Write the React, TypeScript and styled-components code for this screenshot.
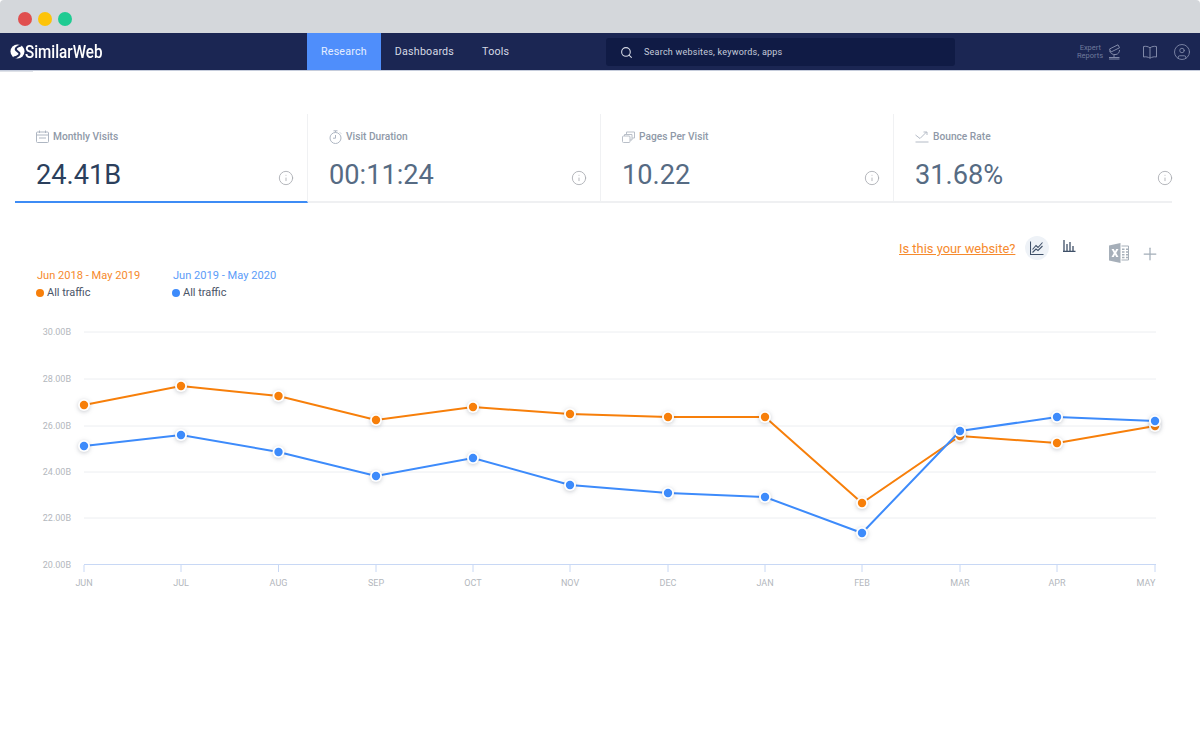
import React from 'react';
import styled, { createGlobalStyle } from 'styled-components';
import { CircleUser, Info, Plus, Search } from 'lucide-react';

const GlobalStyle = createGlobalStyle`
    html, body {
        margin: 0;
        background: #fff;
        overflow: hidden;
    }
    * {
        box-sizing: border-box;
    }
    body {
        font-family: Roboto, "Liberation Sans", sans-serif;
    }
`;

const Page = styled.div`
    width: 1200px;
    height: 730px;
    overflow: hidden;
`;

const WindowBar = styled.div`
    display: flex;
    align-items: center;
    gap: 6px;
    height: 33px;
    padding: 5px 0 0 18px;
    background: #d4d7db;
    border-radius: 4px 4px 0 0;
`;

const Light = styled.span<{ $color: string }>`
    width: 14px;
    height: 14px;
    border-radius: 50%;
    background: ${(p) => p.$color};
`;

const Nav = styled.nav`
    position: relative;
    display: flex;
    align-items: stretch;
    height: 38px;
    background: #1b2653;
    border-bottom: 1px solid #c6cddc;
    color: #d5d9e4;

    &::after {
        content: '';
        position: absolute;
        left: 0;
        bottom: -2px;
        width: 33px;
        height: 1px;
        background: #dfe2e8;
    }
`;

const LogoWrap = styled.div`
    display: flex;
    flex: none;
    align-items: center;
    width: 307px;
    padding-left: 10px;
`;

const LogoText = styled.span`
    display: inline-block;
    font-size: 19px;
    font-weight: 500;
    color: #fff;
    transform: scaleX(0.8);
    transform-origin: left center;
`;

const NavItem = styled.div<{ $active?: boolean }>`
    display: flex;
    align-items: center;
    justify-content: center;
    padding: 0 14px;
    font-size: 10.7px;
    letter-spacing: 0.2px;
    background: ${(p) => (p.$active ? '#4f8efb' : 'transparent')};
    color: ${(p) => (p.$active ? '#e6eeff' : '#d5d9e4')};
`;

const NavLinks = styled.div`
    display: flex;
    flex: none;
    align-items: stretch;
    width: 299px;
`;

const SearchBox = styled.div`
    display: flex;
    flex: none;
    align-items: center;
    gap: 11px;
    width: 349px;
    height: 28px;
    margin-top: 5px;
    padding-left: 14px;
    background: #101b45;
    border-radius: 3px;
    color: #c5cbdb;
    font-size: 9px;
    letter-spacing: 0.23px;
`;

const NavRight = styled.div`
    display: flex;
    flex: none;
    align-items: center;
    margin-left: 122px;
    color: #7e88a8;
`;

const ExpertLabel = styled.div`
    width: 24px;
    font-size: 7.5px;
    line-height: 8px;
    text-align: right;
    color: #6f7a9c;
    margin-right: 7px;
`;

const NavIconGap = styled.div<{ $gap: number }>`
    display: flex;
    margin-left: ${(p) => p.$gap}px;
`;

const KpiRow = styled.section`
    display: grid;
    grid-template-columns: 293px 293px 293px 278px;
    height: 89px;
    margin: 43px 0 0 15px;
`;

const KpiInfo = styled.div`
    position: absolute;
    right: 13px;
    bottom: 15px;
    display: flex;
    color: #a9acb1;
`;

const KpiTile = styled.div<{ $active?: boolean }>`
    position: relative;
    padding: 16px 0 0 21px;
    border-right: 1px solid #f0f1f3;
    border-bottom: ${(p) => (p.$active ? '2px solid #3e8cf5' : '2px solid #eff0f2')};

    &:last-child {
        border-right: none;
    }

    &:last-child ${KpiInfo} {
        right: -1px;
    }
`;

const KpiTitle = styled.div`
    display: flex;
    align-items: center;
    gap: 4px;
    height: 13px;
    font-size: 10.2px;
    font-weight: 500;
    color: #8f99a8;
    white-space: nowrap;
`;

const KpiValue = styled.div<{ $active?: boolean }>`
    margin-top: 15px;
    font-size: 27.2px;
    line-height: 34px;
    color: ${(p) => (p.$active ? '#2b3f5c' : '#566b83')};
`;

const Toolbar = styled.div`
    display: flex;
    align-items: flex-start;
    height: 31px;
    margin-top: 33px;
    padding-left: 899px;
`;

const SiteLink = styled.a`
    margin-top: 5px;
    width: 116px;
    font-size: 12.9px;
    line-height: 15px;
    color: #f68a2d;
    text-decoration: underline;
    white-space: nowrap;
`;

const ChartToggle = styled.div`
    display: flex;
    align-items: center;
    justify-content: center;
    width: 24px;
    height: 24px;
    margin-left: 10px;
    border-radius: 50%;
    background: #eef2f7;
`;

const BarToggle = styled.div`
    display: flex;
    margin: 4px 0 0 14px;
`;

const ExcelWrap = styled.div`
    display: flex;
    margin: 7px 0 0 33px;
`;

const PlusWrap = styled.div`
    display: flex;
    margin: 8px 0 0 11px;
    color: #a3adb8;
`;

const Legend = styled.div`
    display: flex;
    height: 53px;
    padding-left: 36px;
`;

const LegendGroup = styled.div`
    width: 136px;
    padding-top: 2px;
`;

const LegendRange = styled.div<{ $color: string }>`
    font-size: 11.1px;
    line-height: 14px;
    padding-left: 1px;
    color: ${(p) => p.$color};
    white-space: nowrap;
`;

const LegendItem = styled.div`
    display: flex;
    align-items: center;
    gap: 3px;
    margin-top: 3px;
    font-size: 11px;
    line-height: 14px;
    color: #4a5568;
`;

const LegendDot = styled.span<{ $color: string }>`
    width: 8px;
    height: 8px;
    border-radius: 50%;
    background: ${(p) => p.$color};
`;

const ChartSvg = styled.svg`
    display: block;
    width: 1200px;
    height: 280px;
`;

const AxisText = styled.text`
    font-family: Roboto, "Liberation Sans", sans-serif;
    font-size: 9px;
    fill: #b3b7bd;
`;

const Point = styled.g`
    filter: drop-shadow(0 1px 2px rgba(40, 50, 70, 0.25));
`;

const ORANGE = '#f77f0a';
const BLUE = '#3d8bfb';

const xs = [84, 181, 278.5, 376, 473, 570, 668, 765, 862, 960, 1057, 1155];
const months = ['JUN', 'JUL', 'AUG', 'SEP', 'OCT', 'NOV', 'DEC', 'JAN', 'FEB', 'MAR', 'APR', 'MAY'];
const orange = [405, 386, 396, 420, 407, 414, 417, 417, 503, 436, 443, 426];
const blue = [446, 435, 452, 476, 458, 485, 493, 497, 533, 431, 417, 421];
const grid = [
    { y: 332, label: '30.00B' },
    { y: 379, label: '28.00B' },
    { y: 426, label: '26.00B' },
    { y: 472, label: '24.00B' },
    { y: 518, label: '22.00B' },
];

const Logo = () => (
    <svg width="15" height="15" viewBox="0 0 15 15">
        <circle cx="7.5" cy="7.5" r="7" fill="#fff" />
        <path d="M11 1.5C7 2.5 4.5 4.5 6.5 6.5S11 9 8.5 11.5C7 13 5 13.500 3.500 13.500" fill="none" stroke="#1b2653" strokeWidth="2" />
    </svg>
);

const DishIcon = () => (
    <svg width="13" height="16" viewBox="0 0 13 16" fill="none" stroke="#8089a8" strokeWidth="1">
        <path d="M1.500 5 10 0.800l1.500 3L3 8z" />
        <path d="M1.500 6.500C2 9.500 5 11 8 10.500 10.500 10 11.500 8 11.500 6" />
        <path d="M6 10.800V13M1 13.500h10.500M1 15h10.500" />
    </svg>
);

const BookIcon = () => (
    <svg width="14" height="14" viewBox="0 0 14 14" fill="none" stroke="#8089a8" strokeWidth="1">
        <path d="M0.500 1.500C3 1 5 1.500 7 2.800 9 1.500 11 1 13.500 1.500v10.500C11 11.500 9 12 7 13.200 5 12 3 11.500 0.500 12z" />
        <path d="M7 2.800v10.400" />
    </svg>
);

const CalendarIcon = () => (
    <svg width="13" height="13" viewBox="0 0 13 13" fill="none" stroke="#aeb6c2" strokeWidth="1">
        <rect x="0.500" y="2" width="12" height="10.500" rx="1" />
        <path d="M0.500 5h12M3.500 0.500v2.500M9.500 0.500v2.500M3 8h7" />
    </svg>
);

const StopwatchIcon = () => (
    <svg width="13" height="14" viewBox="0 0 13 14" fill="none" stroke="#aeb6c2" strokeWidth="1">
        <circle cx="6.500" cy="8" r="5.500" />
        <path d="M4.500 0.800h4M6.500 1v1.500M6.500 5v3.200H4M11 2.500l1 1" />
    </svg>
);

const PagesIcon = () => (
    <svg width="13" height="12" viewBox="0 0 13 12" fill="none" stroke="#b9bfc8" strokeWidth="1">
        <rect x="0.500" y="5" width="7.500" height="6.500" rx="1" />
        <path d="M2.500 5V3.500h7.500V9H8M4.500 3.500V1h8v6H10" />
    </svg>
);

const BounceIcon = () => (
    <svg width="14" height="12" viewBox="0 0 14 12" fill="none" stroke="#b4bbc6" strokeWidth="1">
        <path d="M0.500 4 5 7.500 11.500 1M8.500 1h3.500v3M0.500 11h13" />
    </svg>
);

const LineToggleIcon = () => (
    <svg width="14" height="14" viewBox="0 0 14 14" fill="none" stroke="#3f5068" strokeWidth="1.100">
        <path d="M0.500 0.500v13h13" />
        <path d="M2.500 8.500 6 4.500 8 6.500 12.500 1.500M2.500 11.500 6 8 8 9.500 12.500 5" />
    </svg>
);

const BarToggleIcon = () => (
    <svg width="13" height="12" viewBox="0 0 13 12" fill="none" stroke="#3f5068" strokeWidth="1.300">
        <path d="M1 0v11M12.500 11.300H0M4 4v7M7 2v9M10 6v5" />
    </svg>
);

const ExcelIcon = () => (
    <svg width="20" height="20" viewBox="0 0 20 20">
        <path d="M0 2.500 11.500 0v20L0 17.500z" fill="#a6afb9" />
        <path d="M2.500 6h2.300l1.200 2.400L7.200 6h2.300L7.200 10l2.300 4H7.200L6 11.600 4.800 14H2.500l2.300-4z" fill="#fff" />
        <path d="M12.500 3h7v14h-7" fill="none" stroke="#a6afb9" />
        <path d="M13 6.200h2.500M13 9h2.500M13 11.800h2.500M13 14.500h2.500M17 6.200h2M17 9h2M17 11.800h2M17 14.500h2" stroke="#a6afb9" strokeWidth="1.500" />
    </svg>
);

const linePoints = (ys: number[]) => ys.map((y, i) => `${xs[i]},${y - 320}`).join(' ');

const Series = ({ ys, color }: { ys: number[]; color: string }) => (
    <>
        <polyline points={linePoints(ys)} fill="none" stroke={color} strokeWidth="2" />
        {ys.map((y, i) => (
            <Point key={i}>
                <circle cx={xs[i]} cy={y - 320} r="6" fill="#fff" />
                <circle cx={xs[i]} cy={y - 320} r="4.200" fill={color} />
            </Point>
        ))}
    </>
);

const kpis = [
    { title: 'Monthly Visits', value: '24.41B', icon: <CalendarIcon />, active: true },
    { title: 'Visit Duration', value: '00:11:24', icon: <StopwatchIcon /> },
    { title: 'Pages Per Visit', value: '10.22', icon: <PagesIcon /> },
    { title: 'Bounce Rate', value: '31.68%', icon: <BounceIcon /> },
];

const App = () => {
    return (
        <Page>
            <GlobalStyle />
            <WindowBar>
                <Light $color="#e04f4f" />
                <Light $color="#fdc40a" />
                <Light $color="#1fcb92" />
            </WindowBar>
            <Nav>
                <LogoWrap>
                    <Logo />
                    <LogoText>SimilarWeb</LogoText>
                </LogoWrap>
                <NavLinks>
                    <NavItem $active>Research</NavItem>
                    <NavItem>Dashboards</NavItem>
                    <NavItem>Tools</NavItem>
                </NavLinks>
                <SearchBox>
                    <Search size={13} color="#d5d9e4" />
                    Search websites, keywords, apps
                </SearchBox>
                <NavRight>
                    <ExpertLabel>Expert Reports</ExpertLabel>
                    <DishIcon />
                    <NavIconGap $gap={22}>
                        <BookIcon />
                    </NavIconGap>
                    <NavIconGap $gap={16}>
                        <CircleUser size={18} strokeWidth={1.200} color="#8089a8" />
                    </NavIconGap>
                </NavRight>
            </Nav>
            <KpiRow>
                {kpis.map((kpi) => (
                    <KpiTile key={kpi.title} $active={kpi.active}>
                        <KpiTitle>
                            {kpi.icon}
                            {kpi.title}
                        </KpiTitle>
                        <KpiValue $active={kpi.active}>{kpi.value}</KpiValue>
                        <KpiInfo>
                            <Info size={16} strokeWidth={1.300} />
                        </KpiInfo>
                    </KpiTile>
                ))}
            </KpiRow>
            <Toolbar>
                <SiteLink>Is this your website?</SiteLink>
                <ChartToggle>
                    <LineToggleIcon />
                </ChartToggle>
                <BarToggle>
                    <BarToggleIcon />
                </BarToggle>
                <ExcelWrap>
                    <ExcelIcon />
                </ExcelWrap>
                <PlusWrap>
                    <Plus size={20} strokeWidth={1.500} />
                </PlusWrap>
            </Toolbar>
            <Legend>
                <LegendGroup>
                    <LegendRange $color="#f68a2d">Jun 2018 - May 2019</LegendRange>
                    <LegendItem>
                        <LegendDot $color={ORANGE} />
                        All traffic
                    </LegendItem>
                </LegendGroup>
                <LegendGroup>
                    <LegendRange $color="#5b9cf8">Jun 2019 - May 2020</LegendRange>
                    <LegendItem>
                        <LegendDot $color={BLUE} />
                        All traffic
                    </LegendItem>
                </LegendGroup>
            </Legend>
            <ChartSvg viewBox="0 0 1200 280">
                {grid.map((g) => (
                    <g key={g.y}>
                        <line x1="84" x2="1156" y1={g.y - 320} y2={g.y - 320} stroke="#eceef1" />
                        <AxisText x="71" y={g.y - 317} textAnchor="end">
                            {g.label}
                        </AxisText>
                    </g>
                ))}
                <AxisText x="71" y="248" textAnchor="end">
                    20.00B
                </AxisText>
                <line x1="84" x2="1156" y1="244.500" y2="244.500" stroke="#c8d8f5" />
                {xs.map((x, i) => (
                    <g key={x}>
                        <line x1={x} x2={x} y1="245" y2="252" stroke="#c8d8f5" />
                        <AxisText x={i === 11 ? x - 9 : x} y="266" textAnchor="middle">
                            {months[i]}
                        </AxisText>
                    </g>
                ))}
                <Series ys={orange} color={ORANGE} />
                <Series ys={blue} color={BLUE} />
            </ChartSvg>
        </Page>
    );
};

export default App;
